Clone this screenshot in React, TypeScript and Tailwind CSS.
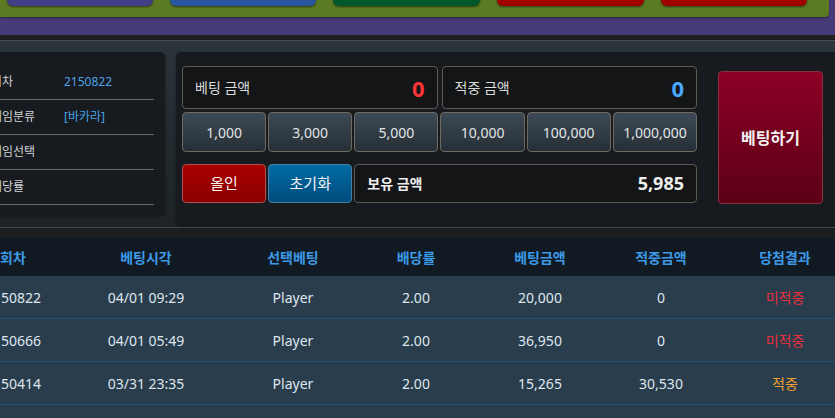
import React from 'react';

const chips = ['1,000', '3,000', '5,000', '10,000', '100,000', '1,000,000'];

const infoRows = [
    { label: '회차', value: '2150822' },
    { label: '게임분류', value: '[바카라]' },
    { label: '게임선택', value: '' },
    { label: '배당률', value: '' },
];

const history = [
    { round: '2150822', time: '04/01 09:29', pick: 'Player', odds: '2.00', bet: '20,000', win: '0', result: '미적중' },
    { round: '2150666', time: '04/01 05:49', pick: 'Player', odds: '2.00', bet: '36,950', win: '0', result: '미적중' },
    { round: '2150414', time: '03/31 23:35', pick: 'Player', odds: '2.00', bet: '15,265', win: '30,530', result: '적중' },
    { round: '2150210', time: '03/31 19:02', pick: 'Banker', odds: '1.95', bet: '10,000', win: '19,500', result: '적중' },
];

const cols = 'grid grid-cols-[88px_178px_116px_130px_118px_124px_124px]';

const App: React.FC = () => {
    return (
        <div
            className="w-[835px] h-[418px] overflow-hidden bg-[#2a3d4c] text-[#dfe6ee]"
            style={{ fontFamily: '"Noto Sans", "Noto Sans CJK KR", sans-serif' }}
        >
            {/* top menu strip */}
            <div className="h-[35px] bg-[#473a78]">
                <div className="h-[17px] w-[829px] bg-[#5b7a23] rounded-br-[4px] shadow-[0_1px_2px_rgba(0,0,0,0.4)] flex gap-[17px] pl-[7px]">
                    <div className="w-[146px] h-[20px] -mt-[14px] rounded-[6px] bg-[#433f86] shadow-[0_1px_2px_rgba(0,0,0,0.5)]" />
                    <div className="w-[146px] h-[20px] -mt-[14px] rounded-[6px] bg-[#2857a0] shadow-[0_1px_2px_rgba(0,0,0,0.5)]" />
                    <div className="w-[147px] h-[20px] -mt-[14px] rounded-[6px] bg-[#005828] shadow-[0_1px_2px_rgba(0,0,0,0.5)]" />
                    <div className="w-[147px] h-[20px] -mt-[14px] rounded-[6px] bg-[#a00000] shadow-[0_1px_2px_rgba(0,0,0,0.5)]" />
                    <div className="w-[146px] h-[20px] -mt-[14px] rounded-[6px] bg-[#a00000] shadow-[0_1px_2px_rgba(0,0,0,0.5)]" />
                </div>
            </div>
            <div className="h-[5px] bg-[#1f1f1f]" />
            <div className="h-px bg-[#4e4e4e]" />

            {/* betting area */}
            <div className="h-[186px] pt-[11px] flex gap-[11px] bg-gradient-to-b from-[#2b353a] to-[#1d2327]">
                <div className="-ml-[30px] w-[195px] h-[163px] shrink-0 rounded-[5px] bg-[#171a1e] pt-[13px] pl-[21px] pr-[11px] shadow-[0_1px_3px_rgba(0,0,0,0.5)]">
                    {infoRows.map(r => (
                        <div key={r.label} className="h-[35px] flex items-center border-b border-[#6a6a6a] text-[12px]">
                            <span className="w-[73px] shrink-0 text-[#cfd3d6]">{r.label}</span>
                            <span className="text-[#4aa3e6]">{r.value}</span>
                        </div>
                    ))}
                </div>

                <div className="w-[680px] h-[173px] shrink-0 rounded-[5px] bg-[#171a1e] pt-[14px] pl-[6px] flex shadow-[0_1px_3px_rgba(0,0,0,0.5)]">
                    <div className="w-[515px] shrink-0">
                        <div className="grid grid-cols-2 gap-[4px] h-[43px]">
                            <div className="flex items-center justify-between px-[12px] rounded-[4px] border border-[#5f5a50] bg-[#131517]">
                                <span className="text-[14px] text-[#dcdcdc]">베팅 금액</span>
                                <span className="text-[22px] font-bold text-[#ff3535] leading-none">0</span>
                            </div>
                            <div className="flex items-center justify-between px-[12px] rounded-[4px] border border-[#5f5a50] bg-[#131517]">
                                <span className="text-[14px] text-[#dcdcdc]">적중 금액</span>
                                <span className="text-[22px] font-bold text-[#4aa8ff] leading-none">0</span>
                            </div>
                        </div>
                        <div className="grid grid-cols-6 gap-x-[2px] mt-[3px] h-[40px]">
                            {chips.map(c => (
                                <button
                                    key={c}
                                    className="rounded-[4px] border border-[#6e6a60] bg-gradient-to-b from-[#3d4a55] to-[#262f37] text-[14px] text-[#e2e4e6]"
                                >
                                    {c}
                                </button>
                            ))}
                        </div>
                        <div className="grid grid-cols-6 gap-x-[2px] mt-[12px] h-[39px]">
                            <button className="rounded-[4px] border border-[#b05050] bg-gradient-to-b from-[#a80000] to-[#8a0000] text-[15px] text-[#f4f4f4]">
                                올인
                            </button>
                            <button className="rounded-[4px] border border-[#4a7fa0] bg-gradient-to-b from-[#006ca4] to-[#004c7e] text-[15px] text-[#f4f4f4]">
                                초기화
                            </button>
                            <div className="col-span-4 flex items-center justify-between px-[12px] rounded-[4px] border border-[#5f5a50] bg-[#131517]">
                                <span className="text-[14px] font-bold text-[#eeeeee]">보유 금액</span>
                                <span className="text-[18px] font-bold text-[#eeeeee]">5,985</span>
                            </div>
                        </div>
                    </div>
                    <button className="ml-[21px] mt-[5px] w-[105px] h-[133px] shrink-0 rounded-[4px] border border-[#8a3040] bg-gradient-to-b from-[#8c0024] to-[#5c0016] text-[16px] font-bold text-[#f2f2f2]">
                        베팅하기
                    </button>
                </div>
            </div>
            <div className="h-px bg-[#4a4a4a]" />
            <div className="h-[10px] bg-[#1c1d1f]" />

            {/* history table */}
            <div className="-ml-[31px] w-[878px]">
                <div className={`${cols} h-[38px] items-center bg-[#111a22] text-[14px] font-bold text-[#3c9ae6] text-center`}>
                    <span>회차</span>
                    <span>베팅시각</span>
                    <span>선택베팅</span>
                    <span>배당률</span>
                    <span>베팅금액</span>
                    <span>적중금액</span>
                    <span>당첨결과</span>
                </div>
                {history.map(h => (
                    <div key={h.round} className={`${cols} h-[43px] items-center border-b border-[#255070] bg-[#2a3d4c] text-[14px] text-center`}>
                        <span>{h.round}</span>
                        <span>{h.time}</span>
                        <span>{h.pick}</span>
                        <span>{h.odds}</span>
                        <span>{h.bet}</span>
                        <span>{h.win}</span>
                        <span className={h.result === '적중' ? 'text-[#f0a030]' : 'text-[#e8303c]'}>{h.result}</span>
                    </div>
                ))}
            </div>
        </div>
    );
};

export default App;
